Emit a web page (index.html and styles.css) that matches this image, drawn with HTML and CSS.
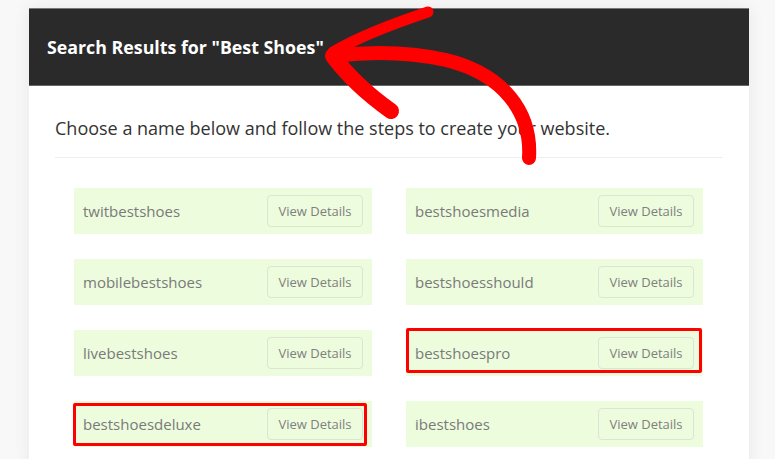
FILE: index.html
```html
<!DOCTYPE html>
<html lang="en">
<head>
<meta charset="UTF-8">
<meta name="viewport" content="width=device-width, initial-scale=1.0">
<title>Search Results</title>
<link rel="stylesheet" href="styles.css">
</head>
<body>
    <div class="card">
        <div class="card-header">
            <h1>Search Results for "Best Shoes"</h1>
        </div>
        <div class="card-body">
            <p class="intro">Choose a name below and follow the steps to create your website.</p>
            <div class="results">
                <div class="result"><span class="name">twitbestshoes</span><button>View Details</button></div>
                <div class="result"><span class="name">bestshoesmedia</span><button>View Details</button></div>
                <div class="result"><span class="name">mobilebestshoes</span><button>View Details</button></div>
                <div class="result"><span class="name">bestshoesshould</span><button>View Details</button></div>
                <div class="result"><span class="name">livebestshoes</span><button>View Details</button></div>
                <div class="result marked marked-right"><span class="name">bestshoespro</span><button>View Details</button></div>
                <div class="result marked marked-left"><span class="name">bestshoesdeluxe</span><button>View Details</button></div>
                <div class="result"><span class="name">ibestshoes</span><button>View Details</button></div>
            </div>
        </div>
    </div>

    <!-- hand drawn arrow pointing at the search term -->
    <svg class="arrow" width="775" height="459" viewBox="0 0 775 459">
        <g fill="none" stroke="#ff0000" stroke-linecap="round" stroke-linejoin="round">
            <path d="M529 158 C532 112 503 74 446 60 C405 51 365 52 334 56" stroke-width="14"/>
            <path d="M333 52 C360 36 398 22 428 12" stroke-width="11"/>
            <path d="M333 56 C350 79 370 96 391 111" stroke-width="16"/>
        </g>
    </svg>
</body>
</html>
```

FILE: styles.css
```css
body {
    font-family: "Open Sans", Arial, sans-serif;
    background-color: #f8f8f8;
    margin: 0;
    padding: 8px 26px 0 29px;
    height: 459px;
    box-sizing: border-box;
    overflow: hidden;
    position: relative;
}

.card {
    width: 720px;
    background-color: #fff;
    box-shadow: 0 0 16px rgba(0, 0, 0, 0.07);
}

.card-header {
    background-color: #2a2a2a;
    border-top: 1px solid #777;
    border-bottom: 1px solid #666;
    height: 76px;
    display: flex;
    align-items: center;
    padding-left: 18px;
}

h1 {
    margin: 0;
    color: #fff;
    font-size: 17.8px;
    font-weight: 700;
}

.card-body {
    padding: 0 26px 20px 26px;
}

.intro {
    margin: 0;
    padding: 30px 0 17px 0;
    font-size: 18px;
    line-height: 24px;
    color: #333;
    border-bottom: 1px solid #eee;
}

.results {
    display: grid;
    grid-template-columns: 298px 297px;
    column-gap: 34px;
    row-gap: 25px;
    padding: 30px 20px 0 19px;
}

.result {
    height: 46px;
    background-color: #edfcdd;
    display: flex;
    align-items: center;
    justify-content: space-between;
    padding: 0 9px 0 9px;
    position: relative;
}

.name {
    font-size: 15px;
    font-weight: 400;
    color: #7a7a7a;
}

button {
    width: 96px;
    height: 32px;
    font-family: "Open Sans", Arial, sans-serif;
    font-size: 13px;
    font-weight: 400;
    color: #7f7f7f;
    background-color: transparent;
    border: 1px solid #dbe5d2;
    border-radius: 4px;
}

.marked::after {
    content: "";
    position: absolute;
    border: 3px solid #ff0000;
    border-radius: 2px;
}

.marked-right::after {
    left: 0;
    top: -2px;
    width: 290px;
    height: 39px;
}

.marked-left::after {
    left: -1px;
    top: 2px;
    width: 288px;
    height: 37px;
}

.arrow {
    position: absolute;
    left: 0;
    top: 0;
    pointer-events: none;
}
```
